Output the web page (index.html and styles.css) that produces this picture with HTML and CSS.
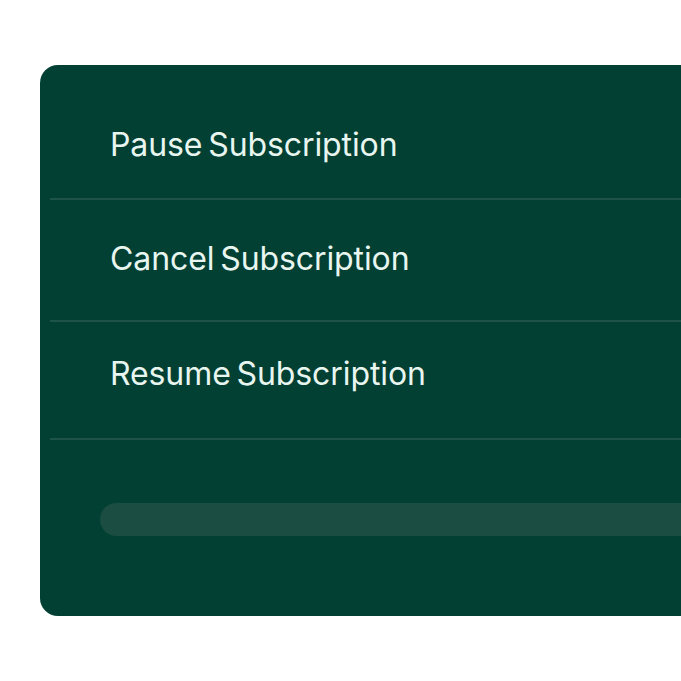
FILE: index.html
```html
<!DOCTYPE html>
<html lang="en">
<head>
<meta charset="utf-8">
<title>Subscription actions</title>
<link rel="stylesheet" href="styles.css">
</head>
<body>
  <div class="card">
    <div class="item item-1"><span class="label">Pause Subscription</span></div>
    <div class="item item-2"><span class="label">Cancel Subscription</span></div>
    <div class="item item-3"><span class="label">Resume Subscription</span></div>
    <div class="bar"></div>
  </div>
</body>
</html>
```
FILE: styles.css
```css
html, body {
  margin: 0;
  padding: 0;
  background: #ffffff;
  overflow: hidden;
  width: 681px;
  height: 681px;
}
body {
  padding-top: 65px;
  padding-left: 40px;
  box-sizing: border-box;
  font-family: "Inter", "Noto Sans", sans-serif;
}
.card {
  width: 641px;
  height: 551px;
  background: #024034;
  border-radius: 18px 0 0 18px;
  display: flex;
  flex-direction: column;
}
.item {
  margin-left: 10px;
  padding-left: 60px;
  border-bottom: 2px solid #1d5447;
  box-sizing: content-box;
}
.label {
  display: block;
  font-size: 32px;
  line-height: 36px;
  color: #e9f6f0;
  font-weight: 400;
  letter-spacing: -0.1px;
  word-spacing: -3px;
}
.item-1 { padding-top: 62px; height: 71px; }
.item-2 { padding-top: 41px; height: 79px; }
.item-3 { padding-top: 34px; height: 82px; }
.bar {
  margin-top: 63px;
  margin-left: 60px;
  height: 33px;
  background: #1b4d42;
  border-radius: 17px 0 0 17px;
}
```
